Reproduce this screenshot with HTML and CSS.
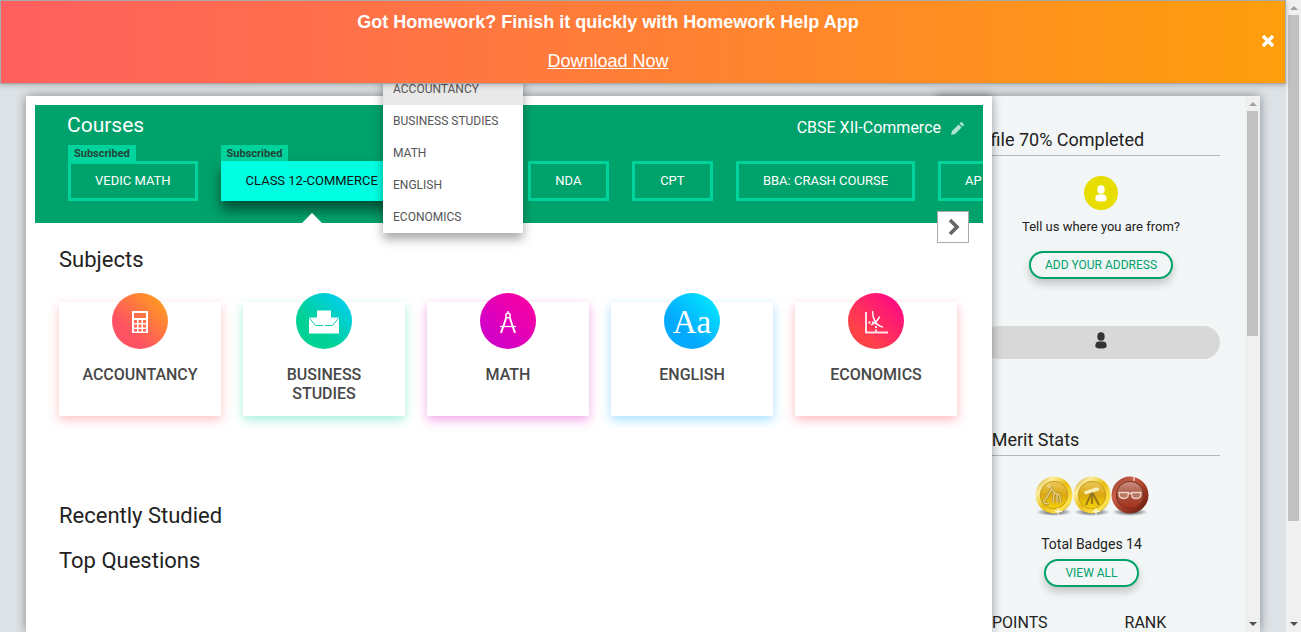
FILE: index.html
```html
<!DOCTYPE html>
<html lang="en">
<head>
<meta charset="utf-8">
<title>Courses</title>
<link rel="stylesheet" href="styles.css">
</head>
<body>
<div class="page">
  <header class="banner">
    <div class="banner-text">
      <strong>Got Homework? Finish it quickly with Homework Help App</strong>
      <a href="#download">Download Now</a>
    </div>
    <button class="banner-close" type="button" aria-label="Close">
      <svg width="14" height="14" viewBox="0 0 14 14"><path d="M2 2l10 10M12 2l-10 10" stroke="#fff" stroke-width="3.400"/></svg>
    </button>
  </header>

  <div class="workspace">
    <main class="main">
      <section class="courses">
        <div class="courses-head">
          <h1>Courses</h1>
          <button class="board" type="button">CBSE XII-Commerce
            <svg width="13" height="13" viewBox="0 0 13 13" fill="#b5e3d2"><path d="M0 13l1-4 6.600-6.600 3 3L4 12zM8.500 1.500L9.600.4c.5-.5 1-.5 1.500 0l1.500 1.500c.5.5.5 1 0 1.500l-1.100 1.100z"/></svg>
          </button>
        </div>
        <ul class="strip">
          <li><span class="tag">Subscribed</span><button class="chip" type="button">VEDIC MATH</button></li>
          <li><span class="tag">Subscribed</span><button class="chip chip-active" type="button">CLASS 12-COMMERCE</button></li>
          <li class="after-menu"><button class="chip" type="button">NDA</button></li>
          <li><button class="chip" type="button">CPT</button></li>
          <li><button class="chip" type="button">BBA: CRASH COURSE</button></li>
          <li><button class="chip chip-wide" type="button">AP</button></li>
        </ul>
        <ul class="menu">
          <li><a class="current" href="#accountancy">ACCOUNTANCY</a></li>
          <li><a href="#business">BUSINESS STUDIES</a></li>
          <li><a href="#math">MATH</a></li>
          <li><a href="#english">ENGLISH</a></li>
          <li><a href="#economics">ECONOMICS</a></li>
        </ul>
        <button class="next" type="button" aria-label="Next courses">
          <svg width="12" height="18" viewBox="0 0 12 18"><path d="M2 2l7 7-7 7" fill="none" stroke="#666" stroke-width="3.600"/></svg>
        </button>
      </section>

      <section class="content">
        <h2>Subjects</h2>
        <div class="cards">
          <a class="card accountancy" href="#accountancy">
            <span class="disc"><svg width="56" height="56" viewBox="0 0 56 56"><path fill="#fff" fill-rule="evenodd" d="M20 18h16v22H20zM22 20v5h12v-5zM22 27v3h3v-3zM26.500 27v3h3v-3zM31 27v3h3v-3zM22 31.500v3h3v-3zM26.500 31.500v3h3v-3zM31 31.500v3h3v-3zM22 36v2.500h3V36zM26.500 36v2.500h3V36zM31 36v2.500h3V36z"/></svg></span>
            <span>ACCOUNTANCY</span>
          </a>
          <a class="card business" href="#business">
            <span class="disc"><svg width="56" height="56" viewBox="0 0 56 56"><path fill="#fff" d="M21 17.500h14v7h8v16H13v-16h8z"/><path d="M13.500 25l6 7.500H27M29 32.500h7.500l6-7.500" fill="none" stroke="#04cfb0" stroke-width="1"/></svg></span>
            <span>BUSINESS STUDIES</span>
          </a>
          <a class="card math" href="#math">
            <span class="disc"><svg width="56" height="56" viewBox="0 0 56 56" fill="none" stroke="#fff"><path d="M28 18v3" stroke-width="1.500"/><circle cx="28" cy="22.500" r="2.200" stroke-width="1.400"/><path d="M26.500 24L22 37l-1 3M29.500 24L34 37l1 3" stroke-width="2"/><path d="M20 33.500h16" stroke-width="1.300"/></svg></span>
            <span>MATH</span>
          </a>
          <a class="card english" href="#english">
            <span class="disc">Aa</span>
            <span>ENGLISH</span>
          </a>
          <a class="card economics" href="#economics">
            <span class="disc"><svg width="56" height="56" viewBox="0 0 56 56" fill="none" stroke="#fff"><path d="M18 19v20.500h22" stroke-width="2" stroke="#ffdfe8"/><path d="M24.500 18c0 7 3 14.500 10.500 16M31.500 23.500c-1 4-4 6-8.500 8.500" stroke-width="1.400"/><path d="M20.500 29.500H28M28 29.500v9" stroke-width="1.800" stroke-dasharray="2 1.500"/></svg></span>
            <span>ECONOMICS</span>
          </a>
        </div>
        <h2 class="recent">Recently Studied</h2>
        <h2 class="top">Top Questions</h2>
      </section>
    </main>

    <aside class="profile">
      <div class="profile-body">
        <h3>Profile 70% Completed</h3>
        <div class="address">
          <span class="avatar"><svg width="12" height="17" viewBox="0 0 12 17" fill="#fff"><ellipse cx="6" cy="4.500" rx="3.700" ry="4.300"/><path d="M3.500 9.500h5C11 9.500 12 12.500 11.500 15c-2 2-9 2-11 0C0 12.500 1 9.500 3.500 9.500z"/></svg></span>
          <p>Tell us where you are from?</p>
          <button class="pill" type="button">ADD YOUR ADDRESS</button>
          <div class="bar"><svg width="12" height="17" viewBox="0 0 12 17" fill="#333"><ellipse cx="6" cy="4.500" rx="3.700" ry="4.300"/><path d="M3.500 9.500h5C11 9.500 12 12.500 11.500 15c-2 2-9 2-11 0C0 12.500 1 9.500 3.500 9.500z"/></svg></div>
        </div>
        <h3>My Merit Stats</h3>
        <div class="merit">
          <svg class="badges" width="116" height="40" viewBox="0 0 116 40">
            <defs>
              <linearGradient id="gold" x1="0" y1="0" x2="1" y2="1"><stop offset="0" stop-color="#b98a08"/><stop offset=".25" stop-color="#fff0a0"/><stop offset=".5" stop-color="#e8bd14"/><stop offset=".8" stop-color="#ffe44d"/><stop offset="1" stop-color="#8d6404"/></linearGradient>
              <linearGradient id="goldIn" x1="0" y1="0" x2="0" y2="1"><stop offset="0" stop-color="#e9c75c"/><stop offset=".5" stop-color="#dba90f"/><stop offset="1" stop-color="#f6d408"/></linearGradient>
              <linearGradient id="red" x1="0" y1="0" x2="1" y2="1"><stop offset="0" stop-color="#8c3222"/><stop offset=".3" stop-color="#c9604a"/><stop offset=".6" stop-color="#a33a25"/><stop offset="1" stop-color="#5b160c"/></linearGradient>
              <linearGradient id="redIn" x1="0" y1="0" x2="0" y2="1"><stop offset="0" stop-color="#cf9183"/><stop offset=".5" stop-color="#a5533f"/><stop offset="1" stop-color="#a82e18"/></linearGradient>
              <radialGradient id="under"><stop offset="0" stop-color="#222" stop-opacity=".9"/><stop offset="1" stop-color="#222" stop-opacity="0"/></radialGradient>
            </defs>
            <g fill="url(#under)"><ellipse cx="20" cy="36" rx="18" ry="4"/><ellipse cx="58" cy="36" rx="18" ry="4"/><ellipse cx="96" cy="36" rx="18" ry="4"/></g>
            <circle cx="20" cy="19" r="18.500" fill="url(#gold)"/><circle cx="20" cy="19" r="13.700" fill="url(#goldIn)" stroke="#c99c18"/>
            <circle cx="58" cy="19" r="18.500" fill="url(#gold)"/><circle cx="58" cy="19" r="13.700" fill="url(#goldIn)" stroke="#c99c18"/>
            <circle cx="96" cy="19" r="18.500" fill="url(#red)"/><circle cx="96" cy="19" r="13.700" fill="url(#redIn)" stroke="#75301f"/>
            <g fill="none" stroke="#a58225" stroke-width="2.600"><path d="M16 11l5 6 4 1 2 9M20 17l-1 10M23 18l0 9M17 14l-6 10M10 24c-1 3 2 5 5 3"/></g>
            <g fill="none" stroke="#e9cf78" stroke-width="1.500"><path d="M16 11l5 6 4 1 2 9M20 17l-1 10M23 18l0 9M17 14l-6 10M10 24c-1 3 2 5 5 3"/></g>
            <circle cx="15" cy="10" r="2" fill="#e9cf78"/>
            <path d="M58 16l-6 13M58 16l7 13M58 16v12" fill="none" stroke="#94731a" stroke-width="1.800"/>
            <path d="M50 15.500l12-4 3 .5 0 2.500-14 4z" fill="#f8edbd"/>
            <g fill="#b97863" stroke="#f1d1c8" stroke-width="1.300"><path d="M85 16.500h9.500l-.5 4q-1 2-4 2t-4.500-2zM97.500 16.500h9.500l-.5 4q-1 2-4.500 2t-4-2zM94.500 17.500h3"/></g>
            <path d="M24 32v7M21 35.500h7M62 32v7M59 35.500h7M100 0v5" stroke="#fff" stroke-opacity=".8" stroke-width="1.300"/>
          </svg>
          <p>Total Badges 14</p>
          <button class="pill pill-small" type="button">VIEW ALL</button>
        </div>
        <div class="totals"><span>POINTS</span><span>RANK</span></div>
      </div>
      <div class="scroll" aria-hidden="true"><i class="up"></i><i class="thumb thumb-profile"></i><i class="down"></i></div>
    </aside>
  </div>
</div>
<div class="scroll" aria-hidden="true"><i class="up"></i><i class="thumb thumb-page"></i><i class="down"></i></div>
</body>
</html>
```
FILE: styles.css
```css
* { box-sizing: border-box; }
body { margin: 0; display: flex; height: 100vh; overflow: hidden; background: #dde2e6; color: #222; font-family: Roboto, "Liberation Sans", sans-serif; }
h1, h2, h3, p, ul { margin: 0; padding: 0; font-weight: 400; }
ul { list-style: none; }
button { font-family: inherit; cursor: pointer; }
a { color: inherit; text-decoration: none; }
svg { display: block; }

.page { flex: 1; min-width: 0; display: flex; flex-direction: column; }

.banner { position: relative; z-index: 5; flex: none; display: flex; align-items: center; padding: 0 10px 2px 0; height: 84px; border: 1px solid #a9a9a9; background: linear-gradient(90deg, #ff5f5f, #ff9f0c); color: #fff; font-family: "Liberation Sans", Arial, sans-serif; font-size: 18px; box-shadow: 0 1px 5px rgba(0, 0, 0, .25); }
.banner-text { flex: 1; display: flex; flex-direction: column; align-items: center; gap: 19px; padding-right: 46px; line-height: 20px; }
.banner-text a { text-decoration: underline; }
.banner-close { padding: 0; border: 0; background: none; }

.workspace { flex: 1; min-height: 0; display: flex; padding: 12px 26px 0; }
.main { position: relative; z-index: 2; flex: 1; min-width: 0; padding: 9px; background: #fff; box-shadow: 0 0 10px rgba(0, 0, 0, .4); }

.courses { position: relative; height: 118px; background: #00a26b; color: #fff; }
.courses-head { display: flex; justify-content: space-between; align-items: center; height: 40px; padding: 0 19px 0 32px; }
.courses-head h1 { font-size: 21px; line-height: 40px; }
.board { display: flex; align-items: center; gap: 10px; padding: 6px 0 0; border: 0; background: none; color: #fff; font-size: 16px; line-height: 20px; }
.strip { display: flex; align-items: flex-end; gap: 23px; height: 78px; padding: 0 0 22px 33px; overflow: hidden; }
.strip li { flex: none; }
.strip .after-menu { margin-left: 102px; }
.tag { display: block; width: max-content; height: 16px; padding: 0 6px; background: #00d49c; color: #24443a; font-size: 11px; font-weight: 700; line-height: 17px; }
.chip { display: block; min-width: 81px; height: 40px; padding: 0 24px; border: 3px solid #00d49c; background: none; color: #fff; font-size: 13px; line-height: 34px; white-space: nowrap; }
.chip-active { position: relative; padding: 0 22px; border-color: #00ffe1; background: #00ffe1; color: #111; box-shadow: 0 9px 12px rgba(0, 0, 0, .5); }
.chip-active::after { content: ""; position: absolute; top: 49px; left: 50%; margin-left: -10px; border: 10px solid transparent; border-top: 0; border-bottom-color: #fff; }
.chip-wide { width: 130px; text-align: left; }
.menu { position: absolute; z-index: 3; top: -32px; left: 348px; width: 140px; background: #fff; box-shadow: 0 6px 10px rgba(0, 0, 0, .35); color: #555; font-size: 12px; }
.menu a { display: block; height: 32px; padding: 0 10px; line-height: 32px; }
.menu .current { background: #e9e9e9; }
.next { position: absolute; right: 14px; bottom: -20px; width: 32px; height: 32px; padding: 0 0 0 10px; border: 1px solid #aaa; background: #fff; }

.content { padding: 23px 26px 0 24px; }
.content h2 { font-size: 22px; line-height: 28px; }
.cards { display: grid; grid-template-columns: repeat(5, 1fr); gap: 22px; padding-top: 28px; }
.card { display: flex; flex-direction: column; align-items: center; min-height: 114px; padding: 0 20px 13px; color: #484848; font-size: 16px; font-weight: 500; line-height: 19px; text-align: center; }
.disc { width: 56px; height: 56px; margin: -9px 0 16px; border-radius: 50%; color: #fff; font: 33px/58px "Liberation Serif", serif; }
.accountancy { box-shadow: 0 4px 10px rgba(255, 85, 95, .35); }
.accountancy .disc { background: linear-gradient(45deg, #ff5263 30%, #ffaa12); }
.business { box-shadow: 0 4px 10px rgba(0, 212, 156, .35); }
.business .disc { background: linear-gradient(45deg, #00d195 35%, #00cfff); }
.math { box-shadow: 0 4px 10px rgba(220, 0, 190, .35); }
.math .disc { background: linear-gradient(45deg, #d400c6 25%, #ff009a); }
.english { box-shadow: 0 4px 10px rgba(0, 170, 255, .35); }
.english .disc { background: linear-gradient(45deg, #05aaff 35%, #00f0ff); }
.economics { box-shadow: 0 4px 10px rgba(255, 60, 80, .35); }
.economics .disc { background: linear-gradient(45deg, #ff4248 25%, #ff008f); }
.content .recent { margin-top: 86px; }
.content .top { margin-top: 17px; }

.profile { flex: none; display: flex; width: 324px; margin-left: -56px; background: #f2f6f7; box-shadow: 0 0 10px rgba(0, 0, 0, .4); }
.profile-body { flex: 1; min-width: 0; padding: 31px 25px 0 27px; overflow: hidden; }
.profile h3 { padding-bottom: 3px; border-bottom: 1px solid #b5b9bb; font-size: 18px; line-height: 25px; }
.address { display: flex; flex-direction: column; align-items: center; padding: 20px 0 68px 19px; font-size: 13px; }
.avatar { display: flex; align-items: center; justify-content: center; width: 34px; height: 34px; border-radius: 50%; background: #e7de00; }
.address p { margin: 8px 0 16px; line-height: 17px; }
.pill { height: 28px; padding: 0 14px; border: 2px solid #00a26b; border-radius: 14px; background: #f2f6f7; box-shadow: 0 5px 8px rgba(0, 0, 0, .2); color: #00a26b; font-size: 12px; line-height: 24px; }
.pill-small { padding: 0 19px; }
.bar { display: flex; justify-content: center; align-self: stretch; height: 33px; margin-top: 47px; padding-top: 6px; border-radius: 17px; background: #d8d8d8; }
.merit { display: flex; flex-direction: column; align-items: center; padding-top: 20px; font-size: 14px; }
.merit p { margin: 18px 0 5px; line-height: 20px; }
.totals { display: flex; gap: 77px; padding: 26px 0 0 29px; font-size: 16px; line-height: 20px; }

.scroll { flex: none; display: flex; flex-direction: column; width: 15px; background: #f0f0f0; }
.scroll i { display: block; }
.up, .down { flex: none; align-self: center; border: 4px solid transparent; }
.up { margin: 6px 0 5px; border-top: 0; border-bottom-color: #a0a0a0; }
.down { margin: auto 0 6px; border-bottom: 0; border-top-color: #505050; }
.thumb { width: 11px; margin: 0 2px; background: #c1c1c1; }
.thumb-profile { height: 42%; }
.thumb-page { height: 80%; }
```
